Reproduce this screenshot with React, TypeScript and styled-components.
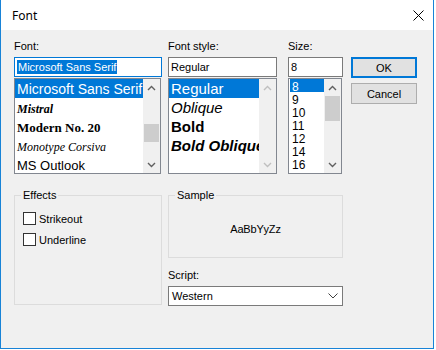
import React from 'react';
import styled, { createGlobalStyle } from 'styled-components';

const GlobalStyle = createGlobalStyle`
  body {
    margin: 0;
    background: #ffffff;
    font-family: "Liberation Sans", Arial, sans-serif;
    color: #000;
  }
`;

const Window = styled.div`
  width: 434px;
  height: 349px;
  box-sizing: border-box;
  border: 1px solid #1883d7;
  border-top: none;
  display: flex;
  flex-direction: column;
  background: #f0f0f0;
`;

const TitleBar = styled.div`
  height: 30px;
  flex: none;
  background: #ffffff;
  display: flex;
  align-items: center;
  justify-content: space-between;
  padding: 0 9px 0 11px;
  font-family: "Noto Sans", "Open Sans", sans-serif;
  font-size: 12px;
`;

const Body = styled.div`
  flex: 1;
  padding: 10px 0 0 13px;
  display: flex;
  flex-direction: column;
`;

const TopRow = styled.div`
  display: flex;
  align-items: flex-start;
`;

const Column = styled.div<{ $w: number; $ml?: number }>`
  width: ${({ $w }) => $w}px;
  margin-left: ${({ $ml }) => $ml || 0}px;
  display: flex;
  flex-direction: column;
`;

const Label = styled.div<{ $mt?: number }>`
  font-size: 11px;
  line-height: 13px;
  height: 13px;
  margin-top: ${({ $mt }) => $mt || 0}px;
  margin-bottom: 4px;
  white-space: nowrap;
`;

const TextBox = styled.div<{ $focused?: boolean }>`
  height: 20px;
  box-sizing: border-box;
  border: 1px solid ${({ $focused }) => ($focused ? '#0078d7' : '#7a7a7a')};
  background: #ffffff;
  font-size: 11px;
  display: flex;
  align-items: center;
  padding-left: 2px;
  white-space: nowrap;
  overflow: hidden;
`;

const SelText = styled.span`
  background: #0078d7;
  color: #ffffff;
  line-height: 14px;
  padding: 0 1px;
`;

const ListBox = styled.div<{ $w: number }>`
  margin-top: 1px;
  width: ${({ $w }) => $w}px;
  height: 96px;
  box-sizing: border-box;
  border: 1px solid #828790;
  background: #ffffff;
  display: flex;
`;

const Items = styled.div`
  flex: 1;
  min-width: 0;
  overflow: hidden;
`;

const Item = styled.div<{ $selected?: boolean; $h: number; $inset?: number }>`
  height: ${({ $h }) => $h}px;
  line-height: ${({ $h }) => $h}px;
  white-space: nowrap;
  padding-left: 2px;
  margin-left: ${({ $inset }) => $inset || 0}px;
  background: ${({ $selected }) => ($selected ? '#0078d7' : 'transparent')};
  color: ${({ $selected }) => ($selected ? '#ffffff' : '#000000')};
`;

const FontName = styled.span<{ $family: string; $size: number; $bold?: boolean; $italic?: boolean }>`
  font-family: ${({ $family }) => $family};
  font-size: ${({ $size }) => $size}px;
  font-weight: ${({ $bold }) => ($bold ? 700 : 400)};
  font-style: ${({ $italic }) => ($italic ? 'italic' : 'normal')};
`;

const ScrollBar = styled.div`
  width: 17px;
  flex: none;
  background: #f0f0f0;
  display: flex;
  flex-direction: column;
`;

const ArrowBtn = styled.div`
  height: 17px;
  flex: none;
  display: flex;
  align-items: center;
  justify-content: center;
`;

const Track = styled.div`
  flex: 1;
`;

const Thumb = styled.div`
  margin: 0 1px;
  background: #cdcdcd;
`;

const ButtonCol = styled.div`
  margin-left: 8px;
  margin-top: 17px;
  width: 66px;
  display: flex;
  flex-direction: column;
  gap: 5px;
`;

const Button = styled.div<{ $default?: boolean }>`
  height: 21px;
  box-sizing: border-box;
  border: ${({ $default }) => ($default ? '2px solid #0078d7' : '1px solid #adadad')};
  background: #e1e1e1;
  font-size: 11px;
  display: flex;
  align-items: center;
  justify-content: center;
`;

const BottomRow = styled.div`
  display: flex;
  align-items: flex-start;
  margin-top: 15px;
`;

const GroupBox = styled.fieldset<{ $w: number; $h: number }>`
  margin: 0;
  padding: 0 6px;
  border: 1px solid #dcdcdc;
  width: ${({ $w }) => $w}px;
  height: ${({ $h }) => $h}px;
  box-sizing: border-box;
  min-width: 0;
`;

const Legend = styled.legend`
  padding: 0 2px;
  font-size: 11px;
  line-height: 13px;
`;

const Checks = styled.div`
  display: flex;
  flex-direction: column;
  gap: 8px;
  padding-top: 10px;
  padding-left: 2px;
`;

const CheckRow = styled.div`
  display: flex;
  align-items: center;
  gap: 3px;
  height: 13px;
  font-size: 11px;
`;

const CheckBox = styled.span`
  width: 13px;
  height: 13px;
  box-sizing: border-box;
  border: 1px solid #333333;
  background: #ffffff;
`;

const RightCol = styled.div`
  margin-left: 6px;
  width: 175px;
  display: flex;
  flex-direction: column;
`;

const SampleArea = styled.div`
  height: 54px;
  display: flex;
  align-items: center;
  justify-content: center;
  font-size: 11px;
  letter-spacing: -0.2px;
`;

const Combo = styled.div`
  height: 20px;
  box-sizing: border-box;
  border: 1px solid #7a7a7a;
  background: #ffffff;
  display: flex;
  align-items: center;
  justify-content: space-between;
  padding: 0 4px 0 3px;
  font-size: 11px;
`;

const Chevron: React.FC<{ up?: boolean; color: string }> = ({ up, color }) => (
  <svg width="9" height="6" viewBox="0 0 9 6">
    <polyline
      points={up ? '1,5 4.5,1.5 8,5' : '1,1 4.5,4.5 8,1'}
      fill="none"
      stroke={color}
      strokeWidth="1.4"
    />
  </svg>
);

const Scroller: React.FC<{ thumbTop?: number; thumbSize?: number; disabled?: boolean }> = ({
  thumbTop,
  thumbSize,
  disabled,
}) => {
  const c = disabled ? '#bfbfbf' : '#606060';
  return (
    <ScrollBar>
      <ArrowBtn>
        <Chevron up color={c} />
      </ArrowBtn>
      <Track>
        {thumbSize ? <Thumb style={{ marginTop: thumbTop, height: thumbSize }} /> : null}
      </Track>
      <ArrowBtn>
        <Chevron color={c} />
      </ArrowBtn>
    </ScrollBar>
  );
};

const fonts = [
  { name: 'Microsoft Sans Serif', family: '"Liberation Sans", sans-serif', size: 14 },
  { name: 'Mistral', family: '"Liberation Serif", serif', size: 12, italic: true, bold: true },
  { name: 'Modern No. 20', family: '"Liberation Serif", serif', size: 13, bold: true },
  { name: 'Monotype Corsiva', family: '"Liberation Serif", serif', size: 12, italic: true },
  { name: 'MS Outlook', family: '"Liberation Sans", sans-serif', size: 13 },
];

const styles = [
  { name: 'Regular' },
  { name: 'Oblique', italic: true },
  { name: 'Bold', bold: true },
  { name: 'Bold Oblique', bold: true, italic: true },
];

const sizes = ['8', '9', '10', '11', '12', '14', '16'];

const App: React.FC = () => {
  return (
    <>
      <GlobalStyle />
      <Window>
        <TitleBar>
          <span>Font</span>
          <svg width="11" height="11" viewBox="0 0 11 11">
            <path d="M0.5 0.5 L10.5 10.5 M10.5 0.5 L0.5 10.5" stroke="#000" strokeWidth="1" />
          </svg>
        </TitleBar>
        <Body>
          <TopRow>
            <Column $w={148}>
              <Label>Font:</Label>
              <TextBox $focused>
                <SelText>Microsoft Sans Serif</SelText>
              </TextBox>
              <ListBox $w={147}>
                <Items>
                  {fonts.map((f, i) => (
                    <Item key={f.name} $h={19} $selected={i === 0}>
                      <FontName $family={f.family} $size={f.size} $bold={f.bold} $italic={f.italic}>
                        {f.name}
                      </FontName>
                    </Item>
                  ))}
                </Items>
                <Scroller thumbTop={28} thumbSize={18} />
              </ListBox>
            </Column>

            <Column $w={109} $ml={6}>
              <Label>Font style:</Label>
              <TextBox>Regular</TextBox>
              <ListBox $w={109}>
                <Items>
                  {styles.map((s, i) => (
                    <Item key={s.name} $h={19} $selected={i === 0}>
                      <FontName
                        $family='"Liberation Sans", sans-serif'
                        $size={15}
                        $bold={s.bold}
                        $italic={s.italic}
                      >
                        {s.name}
                      </FontName>
                    </Item>
                  ))}
                </Items>
                <Scroller disabled />
              </ListBox>
            </Column>

            <Column $w={55} $ml={11}>
              <Label>Size:</Label>
              <TextBox>8</TextBox>
              <ListBox $w={54}>
                <Items>
                  {sizes.map((s, i) => (
                    <Item key={s} $h={13} $inset={1} $selected={i === 0}>
                      <FontName $family='"Liberation Sans", sans-serif' $size={12}>
                        {s}
                      </FontName>
                    </Item>
                  ))}
                </Items>
                <Scroller thumbTop={0} thumbSize={25} />
              </ListBox>
            </Column>

            <ButtonCol>
              <Button $default>OK</Button>
              <Button>Cancel</Button>
            </ButtonCol>
          </TopRow>

          <BottomRow>
            <GroupBox $w={148} $h={116}>
              <Legend>Effects</Legend>
              <Checks>
                <CheckRow>
                  <CheckBox />
                  Strikeout
                </CheckRow>
                <CheckRow>
                  <CheckBox />
                  Underline
                </CheckRow>
              </Checks>
            </GroupBox>

            <RightCol>
              <GroupBox $w={175} $h={69}>
                <Legend>Sample</Legend>
                <SampleArea>AaBbYyZz</SampleArea>
              </GroupBox>
              <Label $mt={11}>Script:</Label>
              <Combo>
                <span>Western</span>
                <svg width="10" height="6" viewBox="0 0 10 6">
                  <polyline points="0.5,0.5 5,5 9.5,0.5" fill="none" stroke="#404040" strokeWidth="1" />
                </svg>
              </Combo>
            </RightCol>
          </BottomRow>
        </Body>
      </Window>
    </>
  );
};

export default App;
